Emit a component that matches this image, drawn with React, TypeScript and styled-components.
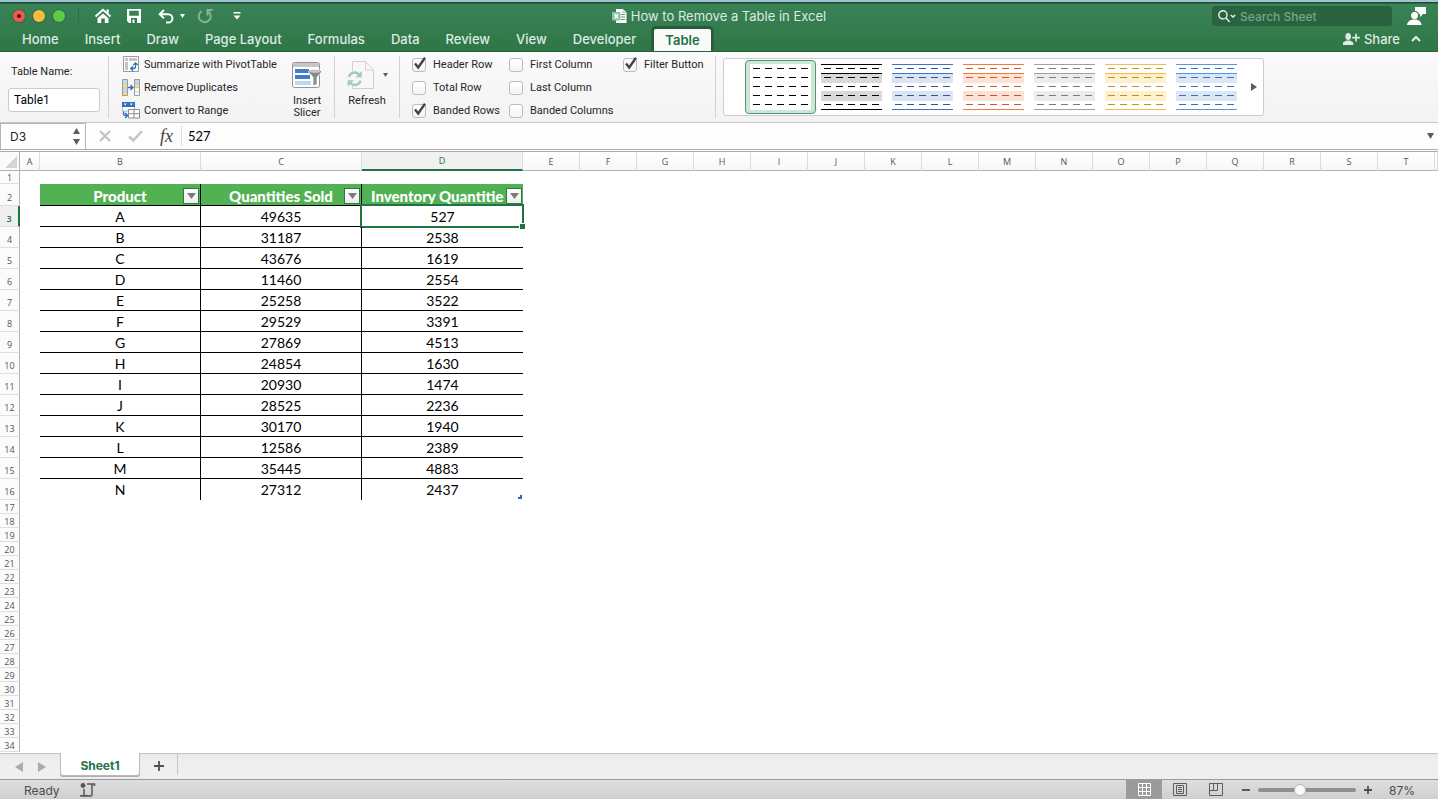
import React from 'react';
import styled, { createGlobalStyle, css } from 'styled-components';

const UI = "Inter, 'Liberation Sans', sans-serif";
const RIBBON = "Roboto, 'Liberation Sans', sans-serif";
const SHEET = "Lato, 'Open Sans', sans-serif";
const GREEN = '#217346';

const GlobalStyle = createGlobalStyle`
  *, *::before, *::after { box-sizing: border-box; }
  body { margin: 0; background: #fff; }
  button, input { font: inherit; color: inherit; margin: 0; padding: 0; border: 0; background: none; }
  button { cursor: pointer; }
  svg { display: block; flex: none; }
`;

const Window = styled.div`
  display: flex;
  flex-direction: column;
  height: 100vh;
  overflow: hidden;
  font-family: ${UI};
  font-size: 11px;
  color: #262626;
`;

/* ---------- title bar and tabs ---------- */

const Header = styled.header`
  flex: none;
  display: flex;
  flex-direction: column;
  height: 52px;
  padding-top: 4px;
  border-top: 2px solid #9fc3d3;
  border-bottom: 1px solid #246339;
  background: linear-gradient(#1d4a31 0 1px, #398357 2px, #307546);
  color: #dcece2;
  font-size: 13px;
`;

const TitleBar = styled.div`
  display: grid;
  grid-template-columns: 1fr auto 1fr;
  align-items: center;
  height: 20px;
`;

const QuickAccess = styled.div`
  display: flex;
  align-items: center;
  padding-left: 13px;
  color: #fff;
`;

const Light = styled.button<{ $color: string }>`
  display: grid;
  place-items: center;
  width: 12px;
  height: 12px;
  margin-right: 8px;
  border-radius: 50%;
  background: ${(p) => p.$color};
  box-shadow: 0 0 0 1px rgba(0, 0, 0, 0.15);
`;

const LightDot = styled.span`
  width: 4px;
  height: 4px;
  border-radius: 50%;
  background: #4d0b08;
`;

const FaintRule = styled.span`
  width: 1px;
  height: 16px;
  margin: 0 15px 0 5px;
  background: #2f6f48;
`;

const ToolButton = styled.button<{ $gap?: number; $dim?: boolean }>`
  display: block;
  margin-right: ${(p) => p.$gap ?? 15}px;
  opacity: ${(p) => (p.$dim ? 0.4 : 1)};
`;

const Title = styled.h1`
  display: flex;
  align-items: center;
  gap: 4px;
  margin: 0;
  font-size: 13px;
  font-weight: 400;
`;

const TitleRight = styled.div`
  display: flex;
  justify-content: flex-end;
  align-items: center;
  gap: 15px;
  padding-right: 12px;
`;

const SearchBox = styled.label`
  display: flex;
  align-items: center;
  gap: 4px;
  width: 180px;
  height: 20px;
  padding-left: 6px;
  border-radius: 3px;
  background: #29633f;
  color: #fff;
`;

const SearchInput = styled.input`
  flex: 1;
  min-width: 0;
  outline: 0;
  font-size: 12px;
  font-weight: 500;
  &::placeholder { color: #74a888; opacity: 1; }
`;

const TabBar = styled.div`
  flex: 1;
  display: flex;
  align-items: flex-end;
  justify-content: space-between;
  padding: 0 17px 0 9px;
`;

const Tabs = styled.nav`
  display: flex;
  align-items: flex-end;
`;

const Tab = styled.button<{ $active?: boolean }>`
  height: 24px;
  padding: 0 13px;
  font-weight: 500;
  line-height: 22px;
  ${(p) =>
    p.$active &&
    css`
      height: 22px;
      margin-left: 5px;
      padding: 0 11px;
      border-radius: 2px 2px 0 0;
      background: #fafafa;
      color: ${GREEN};
      font-weight: 600;
      line-height: 20px;
      box-shadow: 0 0 0 3px #255c3a;
      clip-path: inset(-3px -3px 0 -3px);
    `}
`;

const ShareArea = styled.div`
  display: flex;
  align-items: center;
  gap: 11px;
  height: 25px;
`;

const ShareButton = styled.button`
  display: flex;
  align-items: center;
  gap: 4px;
  font-weight: 500;
`;

/* ---------- ribbon ---------- */

const Ribbon = styled.section`
  flex: none;
  display: flex;
  height: 71px;
  border-bottom: 1px solid #c6c6c6;
  background: linear-gradient(#fafafa, #f3f3f3);
  font-family: ${RIBBON};
`;

const Group = styled.div<{ $end?: number }>`
  display: flex;
  padding: 4px ${(p) => p.$end ?? 0}px 0 0;
`;

const Rule = styled.span`
  flex: none;
  width: 1px;
  height: 62px;
  margin-top: 4px;
  background: #d2d2d2;
`;

const NameGroup = styled.label`
  display: flex;
  flex-direction: column;
  gap: 8px;
  width: 108px;
  padding: 12px 8px 0;
  line-height: 16px;
`;

const NameLabel = styled.span`
  padding-left: 3px;
`;

const NameInput = styled.input`
  width: 92px;
  height: 24px;
  padding: 0 5px;
  border: 1px solid #cbcbcb;
  border-radius: 3px;
  background: #fff;
  color: #000;
  font-size: 12px;
`;

const CommandList = styled.div`
  display: flex;
  flex-direction: column;
  width: 175px;
  padding: 1px 0 0 13px;
`;

const Command = styled.button`
  display: flex;
  align-items: center;
  gap: 4px;
  height: 23px;
  text-align: left;
  white-space: nowrap;
`;

const BigButton = styled.button<{ $width: number }>`
  display: flex;
  flex-direction: column;
  align-items: center;
  gap: 6px;
  width: ${(p) => p.$width}px;
  height: 64px;
  padding-top: 5px;
  line-height: 12px;
`;

const IconRow = styled.span`
  display: flex;
  align-items: center;
  gap: 8px;
`;

const OptionGrid = styled.div`
  display: grid;
  grid-template-columns: 97px 114px 92px;
  grid-template-rows: repeat(3, 23px);
  grid-auto-flow: column;
  padding: 1px 0 0 12px;
`;

const OptionLabel = styled.label`
  display: flex;
  align-items: center;
  gap: 6px;
  white-space: nowrap;
`;

const BoxWrap = styled.span`
  display: grid;
  & > * { grid-area: 1 / 1; }
  svg { margin-top: -1px; pointer-events: none; }
  input:not(:checked) + svg { visibility: hidden; }
`;

const Box = styled.input`
  appearance: none;
  width: 14px;
  height: 14px;
  border: 1px solid #bdbdbd;
  border-radius: 3px;
  background: linear-gradient(#fff, #f4f4f4);
`;

const Gallery = styled.div`
  display: flex;
  align-items: center;
  align-self: flex-start;
  height: 58px;
  margin: 6px 0 0 7px;
  padding-left: 21px;
  border: 1px solid #cdcdcd;
  border-radius: 3px;
  background: #fff;
`;

const StyleButton = styled.button<{ $active?: boolean }>`
  display: grid;
  place-items: center;
  width: 71px;
  height: 54px;
  border-radius: 4px;
  ${(p) =>
    p.$active &&
    css`
      border: 1px solid #4f9870;
      background: #cfe5d9;
      svg { background: #fff; }
    `}
`;

const MoreStyles = styled.button`
  display: grid;
  place-items: center;
  width: 21px;
  height: 54px;
  padding-left: 3px;
`;

/* ---------- formula bar ---------- */

const FormulaBar = styled.div`
  flex: none;
  display: flex;
  align-items: center;
  height: 29px;
  border-bottom: 3px double #ababab;
  background: #fdfdfd;
`;

const CellName = styled.div`
  display: flex;
  align-items: center;
  width: 86px;
  height: 26px;
  padding: 0 5px 0 9px;
  border: 1px solid #b5b5b5;
  border-width: 1px 1px 0;
  background: #fff;
`;

const CellNameInput = styled.input`
  flex: 1;
  min-width: 0;
  font-family: ${UI};
  font-size: 12px;
`;

const Stepper = styled.span`
  display: flex;
  flex-direction: column;
  gap: 5px;
`;

const FormulaTools = styled.div`
  display: flex;
  align-items: center;
  gap: 17px;
  padding: 0 5px 0 13px;
  border-right: 1px solid #dcdcdc;
`;

const FormulaInput = styled.input`
  flex: 1;
  min-width: 0;
  padding-left: 6px;
  color: #000;
  font-family: ${SHEET};
  font-size: 13px;
`;

const Expand = styled.button`
  padding: 0 4px;
`;

/* ---------- sheet ---------- */

const Sheet = styled.main`
  flex: 1;
  min-height: 0;
  overflow: hidden;
  background: #fff;
`;

const Grid = styled.table`
  width: 100%;
  table-layout: fixed;
  border-collapse: separate;
  border-spacing: 0;
  font-family: ${SHEET};
`;

const Col = styled.col<{ $w?: number }>`
  width: ${(p) => (p.$w ? `${p.$w}px` : 'auto')};
`;

const ColumnHead = styled.th<{ $active?: boolean }>`
  height: 19px;
  padding: 0;
  border-right: 1px solid #dcdcdc;
  border-bottom: 1px solid #b3b3b3;
  background: linear-gradient(#fff, #f7f7f7);
  color: #555;
  font-family: 'Open Sans', sans-serif;
  font-size: 9px;
  font-weight: 400;
  line-height: 17px;
  ${(p) =>
    p.$active &&
    css`
      border-bottom: 2px solid ${GREEN};
      background: #f1f1f1;
      color: ${GREEN};
      line-height: 16px;
    `}
`;

const Corner = styled.td`
  padding: 2px 2px 0 5px;
  border-right: 1px solid #b3b3b3;
  border-bottom: 1px solid #b3b3b3;
  background: #fafafa;
`;

const RowHead = styled.th<{ $h: number; $active?: boolean }>`
  height: ${(p) => p.$h}px;
  padding: ${(p) => (p.$h > 14 ? 6 : 2)}px 0 0;
  border-right: 1px solid #b3b3b3;
  border-bottom: 1px solid #dedede;
  background: #fbfbfb;
  color: #555;
  font-family: 'Open Sans', sans-serif;
  font-size: 9px;
  font-weight: 400;
  line-height: 10px;
  ${(p) =>
    p.$active &&
    css`
      border-right: 2px solid ${GREEN};
      background: #efefef;
      color: ${GREEN};
      font-weight: 600;
    `}
`;

const Blank = styled.td`
  padding: 0;
`;

const FieldHead = styled.th<{ $last?: boolean }>`
  position: relative;
  padding: 2px 0 0;
  border-right: ${(p) => (p.$last ? 0 : 1)}px solid #000;
  border-bottom: 1px solid #000;
  background: #52b152;
  color: #fff;
  font-size: 15px;
  font-weight: 900;
  line-height: 18px;
  white-space: nowrap;
  overflow: hidden;
`;

const FilterButton = styled.button`
  position: absolute;
  right: 1px;
  bottom: 1px;
  display: grid;
  place-items: center;
  width: 16px;
  height: 16px;
  border: 1px solid #2c7a45;
  background: linear-gradient(#fff, #eee);
`;

const Cell = styled.td<{ $end?: boolean; $last?: boolean }>`
  position: relative;
  padding: ${(p) => (p.$last ? 1 : 2)}px 0 0;
  border-right: ${(p) => (p.$end ? 0 : 1)}px solid #000;
  border-bottom: ${(p) => (p.$last ? 0 : 1)}px solid #000;
  color: #000;
  font-size: 14px;
  line-height: 18px;
  text-align: center;
`;

const Selection = styled.span`
  position: absolute;
  inset: -2px -1px -2px -2px;
  border: 2px solid ${GREEN};
  &::after {
    content: '';
    position: absolute;
    right: -4px;
    bottom: -4px;
    width: 7px;
    height: 7px;
    border: 1px solid #fff;
    background: ${GREEN};
  }
`;

const TableEnd = styled.span`
  position: absolute;
  right: 1px;
  bottom: 1px;
  width: 4px;
  height: 4px;
  border: 2px solid #3a62b8;
  border-width: 0 2px 2px 0;
`;

/* ---------- sheet tabs and status ---------- */

const SheetBar = styled.div`
  flex: none;
  display: flex;
  height: 26px;
  border-top: 1px solid #c4c4c4;
  background: linear-gradient(#e8e8e8, #efefef 30%);
`;

const SheetNav = styled.div`
  display: flex;
  align-items: center;
  gap: 15px;
  width: 60px;
  padding-left: 15px;
`;

const SheetTab = styled.button`
  width: 80px;
  height: 23px;
  margin-top: -1px;
  padding-top: 2px;
  border: 1px solid #b9b9b9;
  border-top: 0;
  border-radius: 0 0 3px 3px;
  background: #fff;
  color: ${GREEN};
  font-size: 12px;
  font-weight: 700;
  box-shadow: 0 1px 0 #b0b0b0;
`;

const AddSheet = styled.button`
  display: grid;
  place-items: center;
  width: 38px;
  height: 21px;
  padding-top: 2px;
  border-right: 1px solid #c6c6c6;
`;

const StatusBar = styled.footer`
  flex: none;
  display: flex;
  justify-content: space-between;
  height: 20px;
  padding: 1px 23px 0 24px;
  border-top: 1px solid #9b9b9b;
  background: linear-gradient(#dedede, #cfcfcf);
  color: #4c4c4c;
  font-size: 12px;
`;

const StatusPart = styled.div<{ $gap: number }>`
  display: flex;
  align-items: center;
  gap: ${(p) => p.$gap}px;
`;

const ViewButton = styled.button<{ $active?: boolean }>`
  display: grid;
  place-items: center;
  width: 36px;
  height: 20px;
  margin-top: -1px;
  background: ${(p) => (p.$active ? '#9a9a9a' : 'transparent')};
`;

const ZoomControls = styled.div`
  display: flex;
  align-items: center;
  gap: 8px;
  padding: 0 17px 0 8px;
`;

const Slider = styled.input`
  appearance: none;
  width: 98px;
  height: 14px;
  &::-webkit-slider-runnable-track {
    height: 4px;
    border-radius: 2px;
    background: #8f8f8f;
  }
  &::-webkit-slider-thumb {
    appearance: none;
    width: 12px;
    height: 12px;
    margin-top: -4px;
    border: 1px solid #b5b5b5;
    border-radius: 50%;
    background: #fafafa;
  }
`;

/* ---------- icons ---------- */

const Triangle = ({ dir, w, h, fill = '#5c5c5c' }: { dir: 'up' | 'down' | 'left' | 'right'; w: number; h: number; fill?: string }) => {
  const points = {
    up: `0,${h} ${w},${h} ${w / 2},0`,
    down: `0,0 ${w},0 ${w / 2},${h}`,
    left: `${w},0 ${w},${h} 0,${h / 2}`,
    right: `0,0 0,${h} ${w},${h / 2}`,
  }[dir];
  return <svg width={w} height={h}><polygon points={points} fill={fill} /></svg>;
};

const HomeIcon = () => (
  <svg width="18" height="16" viewBox="0 0 18 16">
    <path d="M1.500 8.500 9 1.800l7.500 6.700" fill="none" stroke="#fff" strokeWidth="2" />
    <path d="M12.500 1.500h2.200v4h-2.200zM9 5.400l5.500 4.800V15h-3.700v-4.500H7.200V15H3.500v-4.800z" fill="#fff" />
  </svg>
);

const SaveIcon = () => (
  <svg width="14" height="14" viewBox="0 0 14 14">
    <path fillRule="evenodd" d="M0 0h14v14H2l-2-2zM2.200 1.800v5h9.600v-5zM4 9v5h6V9z" fill="#fff" />
    <path d="M5.500 10.500h2V14h-2z" fill="#fff" />
  </svg>
);

const UndoIcon = () => (
  <svg width="16" height="15" viewBox="0 0 16 15" fill="none" stroke="#fff" strokeWidth="2">
    <path d="M6 1 1.700 5.200 6 9.400M2 5.200h8.200a4.200 4.200 0 0 1 0 8.400H8" />
  </svg>
);

const RedoIcon = () => (
  <svg width="16" height="16" viewBox="0 0 16 16" fill="none" stroke="#fff" strokeWidth="2">
    <path d="M4.500 3.200a6 6 0 1 0 7.200.5M10.500 7.500V2H15.500" />
  </svg>
);

const CustomizeIcon = () => (
  <svg width="8" height="8" viewBox="0 0 8 8">
    <path d="M.5 0h7v1.500h-7zM.5 3.500h7L4 7.500z" fill="#fff" />
  </svg>
);

const FileIcon = () => (
  <svg width="15" height="14" viewBox="0 0 15 14">
    <path d="M4 0h7l3.500 3.500V14H4z" fill="#fff" />
    <path d="M11 0v3.500h3.500" fill="none" stroke="#9cc5ad" />
    <path d="M9 5.500h4M9 8h4M9 10.500h4" stroke="#5a9a75" />
    <path d="M0 3h8.500v8.500H0z" fill="#8fc0a4" />
    <path d="m2.500 5 3.600 4.500M6.100 5 2.500 9.500" stroke="#fff" strokeWidth="1.300" />
  </svg>
);

const SearchIcon = () => (
  <svg width="18" height="13" viewBox="0 0 18 13" fill="none" stroke="#e8f2ec" strokeWidth="1.400">
    <circle cx="4.900" cy="4.900" r="4.100" />
    <path d="m8 8 3.600 4M12.800 5l2.200 2 2.200-2" />
  </svg>
);

const AccountIcon = () => (
  <svg width="19" height="18" viewBox="0 0 19 18" fill="#fff">
    <path d="M8 0h11v7h-3l-3 3V7h-1a4.200 4.200 0 0 0-4-3z" />
    <circle cx="7.500" cy="8.500" r="3.500" />
    <path d="M0 18c.5-4 3.500-5.500 7.500-5.500s6.500 1.500 7 5.500z" />
  </svg>
);

const ShareIcon = () => (
  <svg width="17" height="12" viewBox="0 0 17 12" fill="#dcece2">
    <ellipse cx="5.200" cy="3.500" rx="2.800" ry="3.400" />
    <path d="M0 12V9.500l3.500-2h3.400l3.400 2V12zM12.200.8h1.700v3h3v1.700h-3v3h-1.700v-3h-3V3.800h3z" />
  </svg>
);

const ChevronUp = () => (
  <svg width="10" height="7" viewBox="0 0 10 7" fill="none" stroke="#e3f0e8" strokeWidth="2">
    <path d="m1 6 4-4 4 4" />
  </svg>
);

const PivotIcon = () => (
  <svg width="18" height="17" viewBox="0 0 18 17">
    <path d="M1.500.5h15v15h-15z" fill="#fdfdfd" stroke="#9a9a9a" />
    <path d="M3 2h3v3H3zM7 2h8v3H7zM3 6h3v8H3z" fill="#c4c4c4" />
    <path d="M13.500 7v3.500a2 2 0 0 1-2 2H9M11.300 9l2.200-2.200L15.700 9M11 10.300l-2.200 2.200 2.200 2.200" fill="none" stroke="#2f72c4" strokeWidth="1.300" />
  </svg>
);

const DuplicatesIcon = () => (
  <svg width="18" height="17" viewBox="0 0 18 17">
    <path d="M.5.5h5v16h-5zM12.500.5h5v16h-5z" fill="#fff" stroke="#9a9a9a" />
    <path d="M1 1h4v3.500H1zM13 1h4v3.500h-4zM1 9h4v3.500H1z" fill="#bcdcf4" />
    <path d="M1 5h4v3.500H1zM1 13h4v3H1zM13 5h4v3.500h-4z" fill="#f8dc85" />
    <path d="M.5 4.700h5M.5 8.700h5M.5 12.700h5M12.500 4.700h5M12.500 8.700h5M12.500 12.700h5" stroke="#aaa" strokeWidth=".6" />
    <path d="M6 7.700h2.500V5.200L12 8.500l-3.500 3.300V9.300H6z" fill="#2f72c4" />
  </svg>
);

const ConvertIcon = () => (
  <svg width="18" height="17" viewBox="0 0 18 17">
    <path d="M.5 1h12v8H.5z" fill="#fff" stroke="#9dbbe4" />
    <path d="M0 0h13v5H0z" fill="#2f72c4" />
    <path d="m1.800 1.500 1.500 2 1.500-2zM7.800 1.500l1.500 2 1.500-2z" fill="#fff" />
    <path d="M6.500 7.500h11v8.500h-11zM6.500 11.700h11M12 7.500V16" fill="#fff" stroke="#8c8c8c" />
    <path d="M1.500 9.500v2a2 2 0 0 0 2 2H5M3.300 11l2.300 2.500L3.300 16" fill="none" stroke="#2f72c4" strokeWidth="1.400" />
  </svg>
);

const SlicerIcon = () => (
  <svg width="30" height="28" viewBox="0 0 30 28">
    <rect x=".5" y="1.500" width="27" height="25" rx="2" fill="#fff" stroke="#929292" />
    <path d="M1 3.500a1.500 1.500 0 0 1 1.500-1.500h23A1.500 1.500 0 0 1 27 3.500V6H1z" fill="#c6c6c6" />
    <path d="M3 8h14v4H3zM3 14h15v4H3z" fill="#3f7fca" />
    <path d="M3 20h16v4H3z" fill="#bcd9ef" />
    <path d="M16.500 10.500c0-2.500 13-2.500 13 0 0 1.500-4.500 5-4.500 6v7l-4 1.500v-8.500c0-1-4.500-4.500-4.500-6z" fill="#8a8a8a" stroke="#fff" strokeWidth=".8" />
    <ellipse cx="23" cy="10.500" rx="5" ry="1.300" fill="#c9c9c9" />
  </svg>
);

const RefreshIcon = () => (
  <svg width="28" height="28" viewBox="0 0 28 28" fill="none">
    <path d="M5.500.5h13l8 8.500v18.500h-21z" fill="#f8f8f8" stroke="#d0d0d0" />
    <path d="M18.500.5V9h8" stroke="#d0d0d0" />
    <path d="M.5 10h14v15H.5z" fill="#f7f7f7" />
    <path d="M2 16a5.800 5.800 0 0 1 10-2.500M13.500 19.500a5.800 5.800 0 0 1-10 2.500" stroke="#9fccb2" strokeWidth="2.400" />
    <path d="M14.800 10v6.300H8.500zM.7 25.500v-6.300H7z" fill="#9fccb2" />
  </svg>
);

const CheckMark = () => (
  <svg width="15" height="13" viewBox="0 0 15 13" fill="none" stroke="#444" strokeWidth="2.400">
    <path d="M3 6.500 6.200 10.500 13 .8" />
  </svg>
);

const CancelIcon = () => (
  <svg width="12" height="12" viewBox="0 0 12 12" stroke="#c3c3c3" strokeWidth="2.200">
    <path d="m1 1 10 10M11 1 1 11" />
  </svg>
);

const ConfirmIcon = () => (
  <svg width="15" height="12" viewBox="0 0 15 12" fill="none" stroke="#c3c3c3" strokeWidth="2.400">
    <path d="m1 6.500 4.300 4L14 1" />
  </svg>
);

const Fx = styled.span`
  width: 16px;
  font-family: 'Liberation Serif', serif;
  font-size: 18px;
  font-style: italic;
  line-height: 20px;
  color: #444;
`;

const PlusIcon = ({ size, bold }: { size: number; bold?: boolean }) => (
  <svg width={size} height={size} viewBox="0 0 10 10" stroke="#505050" strokeWidth={bold ? 2.2 : 1.8}>
    <path d="M5 0v10M0 5h10" />
  </svg>
);

const MinusIcon = () => (
  <svg width="8" height="8" viewBox="0 0 8 8"><path d="M0 3h8v2H0z" fill="#5a5a5a" /></svg>
);

const MacroIcon = () => (
  <svg width="16" height="14" viewBox="0 0 16 14" fill="none" stroke="#555" strokeWidth="1.500">
    <circle cx="3" cy="2.500" r="2.400" fill="#555" stroke="none" />
    <path d="M7 1h7.500v2M12 1v10.500a1.500 1.500 0 0 1-1.500 1.500H1.500M4 6v7M0 12.800h8" />
  </svg>
);

const NormalViewIcon = () => (
  <svg width="13" height="13" viewBox="0 0 13 13" fill="none" stroke="#fff">
    <path d="M.5.5h12v12H.5zM.5 4.500h12M.5 8.500h12M4.500.5v12M8.500.5v12" />
  </svg>
);

const PageViewIcon = () => (
  <svg width="14" height="13" viewBox="0 0 14 13" fill="none" stroke="#5c5c5c">
    <path d="M.5.5h13v12H.5zM3.500 2.500h7v8h-7zM5 4.500h4M5 6.500h4M5 8.500h4" />
  </svg>
);

const BreakViewIcon = () => (
  <svg width="14" height="13" viewBox="0 0 14 13" fill="none" stroke="#5c5c5c">
    <path d="M.5.5h13v12H.5zM.5 7.500h8v-7M4.500.5v7" />
  </svg>
);

type Swatch = { name: string; line: string; dash: string; band: string };

const swatches: Swatch[] = [
  { name: 'None', line: 'none', dash: '#000', band: 'none' },
  { name: 'Light 1', line: '#000', dash: '#000', band: '#d9d9d9' },
  { name: 'Light 2', line: '#3c74bd', dash: '#2f5597', band: '#dae4f2' },
  { name: 'Light 3', line: '#e97f3d', dash: '#c9582b', band: '#fbe2d5' },
  { name: 'Light 4', line: '#a0a0a0', dash: '#7b7b7b', band: '#ececec' },
  { name: 'Light 5', line: '#f2bd41', dash: '#bf9230', band: '#fdf0cb' },
  { name: 'Light 6', line: '#5997d3', dash: '#3771ba', band: '#dbe6f4' },
];

const StyleThumb = ({ line, dash, band }: Swatch) => (
  <svg width="61" height="46" viewBox="0 0 61 46">
    <path d="M0 10h61v9H0zM0 27h61v10H0z" fill={band} />
    <path d="M0 .5h61M0 9.500h61M0 45.500h61" stroke={line} />
    <path d="M3 4.500h55M3 13.500h55M3 22.500h55M3 31.500h55M3 40.500h55" stroke={dash} strokeDasharray="7 5" />
  </svg>
);

/* ---------- data ---------- */

const tabs = ['Home', 'Insert', 'Draw', 'Page Layout', 'Formulas', 'Data', 'Review', 'View', 'Developer'];

const options: [string, boolean][] = [
  ['Header Row', true],
  ['Total Row', false],
  ['Banded Rows', true],
  ['First Column', false],
  ['Last Column', false],
  ['Banded Columns', false],
  ['Filter Button', true],
];

const columns = 'ABCDEFGHIJKLMNOPQRST'.split('');
const widths = [20, 161, 161, 161];
const fields = ['Product', 'Quantities Sold', 'Inventory Quantities'];
const records: [string, number, number][] = [
  ['A', 49635, 527],
  ['B', 31187, 2538],
  ['C', 43676, 1619],
  ['D', 11460, 2554],
  ['E', 25258, 3522],
  ['F', 29529, 3391],
  ['G', 27869, 4513],
  ['H', 24854, 1630],
  ['I', 20930, 1474],
  ['J', 28525, 2236],
  ['K', 30170, 1940],
  ['L', 12586, 2389],
  ['M', 35445, 4883],
  ['N', 27312, 2437],
];
const emptyRows = Array.from({ length: 18 }, (_, i) => i + 17);

const FieldText = styled.span<{ $clip?: boolean }>`
  display: block;
  overflow: hidden;
  ${(p) => p.$clip && css`margin: 0 19px 0 9px; text-align: left;`}
`;

export default function App() {
  return (
    <Window>
      <GlobalStyle />
      <Header>
        <TitleBar>
          <QuickAccess>
            <Light $color="#f4574f" aria-label="Close"><LightDot /></Light>
            <Light $color="#fabc40" aria-label="Minimize" />
            <Light $color="#5ecb41" aria-label="Zoom window" />
            <FaintRule />
            <ToolButton aria-label="Home"><HomeIcon /></ToolButton>
            <ToolButton $gap={17} aria-label="Save"><SaveIcon /></ToolButton>
            <ToolButton $gap={6} aria-label="Undo"><UndoIcon /></ToolButton>
            <ToolButton $gap={12} aria-label="Undo history"><Triangle dir="down" w={5} h={4} fill="#fff" /></ToolButton>
            <ToolButton $gap={20} $dim aria-label="Redo"><RedoIcon /></ToolButton>
            <ToolButton aria-label="Customize toolbar"><CustomizeIcon /></ToolButton>
          </QuickAccess>
          <Title><FileIcon />How to Remove a Table in Excel</Title>
          <TitleRight>
            <SearchBox>
              <SearchIcon />
              <SearchInput type="search" placeholder="Search Sheet" aria-label="Search Sheet" />
            </SearchBox>
            <button aria-label="Account"><AccountIcon /></button>
          </TitleRight>
        </TitleBar>
        <TabBar>
          <Tabs>
            {tabs.map((t) => <Tab key={t}>{t}</Tab>)}
            <Tab $active>Table</Tab>
          </Tabs>
          <ShareArea>
            <ShareButton><ShareIcon />Share</ShareButton>
            <button aria-label="Collapse ribbon"><ChevronUp /></button>
          </ShareArea>
        </TabBar>
      </Header>

      <Ribbon>
        <NameGroup>
          <NameLabel>Table Name:</NameLabel>
          <NameInput defaultValue="Table1" />
        </NameGroup>
        <Rule />
        <CommandList>
          <Command><PivotIcon />Summarize with PivotTable</Command>
          <Command><DuplicatesIcon />Remove Duplicates</Command>
          <Command><ConvertIcon />Convert to Range</Command>
        </CommandList>
        <Group $end={4}>
          <BigButton $width={46}>
            <IconRow><SlicerIcon /></IconRow>
            <span>Insert<br />Slicer</span>
          </BigButton>
        </Group>
        <Rule />
        <Group>
          <BigButton $width={64}>
            <IconRow><RefreshIcon /><Triangle dir="down" w={5} h={4} /></IconRow>
            <span>Refresh</span>
          </BigButton>
        </Group>
        <Rule />
        <OptionGrid>
          {options.map(([label, on]) => (
            <OptionLabel key={label}>
              <BoxWrap><Box type="checkbox" defaultChecked={on} /><CheckMark /></BoxWrap>
              {label}
            </OptionLabel>
          ))}
        </OptionGrid>
        <Rule />
        <Gallery>
          {swatches.map((s, i) => (
            <StyleButton key={s.name} $active={i === 0} aria-label={s.name}><StyleThumb {...s} /></StyleButton>
          ))}
          <MoreStyles aria-label="More styles"><Triangle dir="right" w={6} h={8} /></MoreStyles>
        </Gallery>
      </Ribbon>

      <FormulaBar>
        <CellName>
          <CellNameInput defaultValue="D3" aria-label="Cell name" />
          <Stepper>
            <button aria-label="Previous name"><Triangle dir="up" w={7} h={6} /></button>
            <button aria-label="Next name"><Triangle dir="down" w={7} h={6} /></button>
          </Stepper>
        </CellName>
        <FormulaTools>
          <button aria-label="Cancel"><CancelIcon /></button>
          <button aria-label="Enter"><ConfirmIcon /></button>
          <Fx>fx</Fx>
        </FormulaTools>
        <FormulaInput defaultValue="527" aria-label="Formula" />
        <Expand aria-label="Expand formula bar"><Triangle dir="down" w={7} h={6} /></Expand>
      </FormulaBar>

      <Sheet>
        <Grid>
          <colgroup>
            <Col $w={20} />
            {columns.map((c, i) => <Col key={c} $w={widths[i] ?? 57} />)}
            <Col />
          </colgroup>
          <thead>
            <tr>
              <Corner><svg width="12" height="12"><path d="M12 0v12H0z" fill="#d4d4d4" /></svg></Corner>
              {columns.map((c) => <ColumnHead key={c} scope="col" $active={c === 'D'}>{c}</ColumnHead>)}
              <ColumnHead as="td" />
            </tr>
          </thead>
          <tbody>
            <tr>
              <RowHead scope="row" $h={13}>1</RowHead>
              <Blank colSpan={21} />
            </tr>
            <tr>
              <RowHead scope="row" $h={22}>2</RowHead>
              <Blank />
              {fields.map((f, i) => (
                <FieldHead key={f} $last={i === 2}>
                  <FieldText $clip={i === 2}>{f}</FieldText>
                  <FilterButton aria-label={`Filter ${f}`}><Triangle dir="down" w={9} h={6} fill="#7a7a7a" /></FilterButton>
                </FieldHead>
              ))}
              <Blank colSpan={17} />
            </tr>
            {records.map(([product, sold, stock], r) => {
              const last = r === records.length - 1;
              return (
                <tr key={product}>
                  <RowHead scope="row" $h={21} $active={r === 0}>{r + 3}</RowHead>
                  <Blank />
                  <Cell $last={last}>{product}</Cell>
                  <Cell $last={last}>{sold}</Cell>
                  <Cell $last={last} $end>
                    {stock}
                    {r === 0 && <Selection />}
                    {last && <TableEnd />}
                  </Cell>
                  <Blank colSpan={17} />
                </tr>
              );
            })}
            {emptyRows.map((n) => (
              <tr key={n}>
                <RowHead scope="row" $h={14}>{n}</RowHead>
                <Blank colSpan={21} />
              </tr>
            ))}
          </tbody>
        </Grid>
      </Sheet>

      <SheetBar>
        <SheetNav>
          <button aria-label="Previous sheet"><Triangle dir="left" w={8} h={10} fill="#ababab" /></button>
          <button aria-label="Next sheet"><Triangle dir="right" w={8} h={10} fill="#ababab" /></button>
        </SheetNav>
        <SheetTab>Sheet1</SheetTab>
        <AddSheet aria-label="Add sheet"><PlusIcon size={10} /></AddSheet>
      </SheetBar>
      <StatusBar>
        <StatusPart $gap={20}>
          Ready
          <button aria-label="Record macro"><MacroIcon /></button>
        </StatusPart>
        <StatusPart $gap={0}>
          <ViewButton $active aria-label="Normal view"><NormalViewIcon /></ViewButton>
          <ViewButton aria-label="Page layout view"><PageViewIcon /></ViewButton>
          <ViewButton aria-label="Page break view"><BreakViewIcon /></ViewButton>
          <ZoomControls>
            <button aria-label="Zoom out"><MinusIcon /></button>
            <Slider type="range" min="0" max="100" defaultValue="42" aria-label="Zoom" />
            <button aria-label="Zoom in"><PlusIcon size={8} bold /></button>
          </ZoomControls>
          87%
        </StatusPart>
      </StatusBar>
    </Window>
  );
}
